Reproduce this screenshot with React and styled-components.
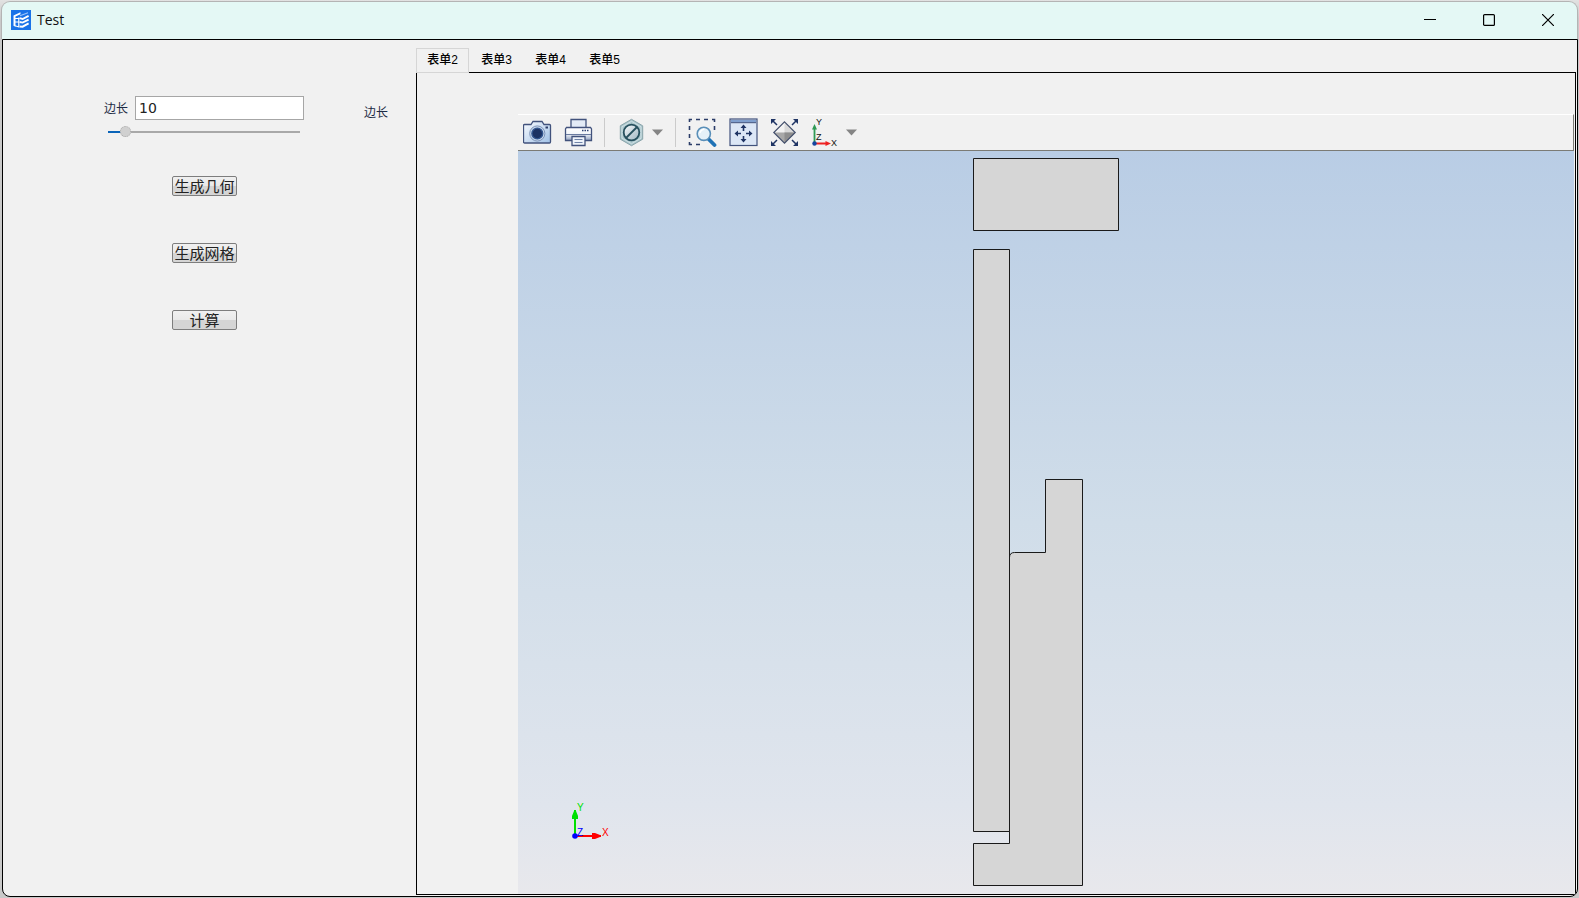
import React, { useState } from 'react'
import styled, { createGlobalStyle } from 'styled-components'

const GlobalStyle = createGlobalStyle`
    * {
        box-sizing: border-box;
    }

    body {
        margin: 0;
        background: #c9c9c9;
        font-family: "Liberation Sans", "Noto Sans CJK SC", sans-serif;
        font-size: 12px;
        color: #222;
    }

    button, input {
        font-family: inherit;
        color: inherit;
    }
`
const Window = styled.div`
    display: flex;
    flex-direction: column;
    min-height: 100vh;
    padding: 1px;
    background: linear-gradient(#e2e2e2, #c9c9c9 20px);
`
const TitleBar = styled.header`
    display: flex;
    align-items: center;
    height: 38px;
    padding: 0 0 2px 9px;
    border: 1px solid #b4b4b4;
    border-bottom: 0;
    border-radius: 9px 9px 0 0;
    background: #e4f8f5;
    overflow: hidden;
`
const Title = styled.h1`
    flex: 1;
    margin: 0 0 0 6px;
    font-family: "Open Sans", sans-serif;
    font-size: 14px;
    font-weight: 400;
    color: #111;
`
const WindowButton = styled.button`
    display: flex;
    align-items: center;
    justify-content: center;
    width: 59px;
    height: 35px;
    padding: 0;
    border: 0;
    background: none;
`
const Body = styled.main`
    display: flex;
    flex: 1;
    margin: 0 0 0 1px;
    padding: 0 1px 1px 0;
    border: 1px solid #000;
    border-radius: 0 0 8px 8px;
    background: #f1f1f1;
    overflow: hidden;
`
const Sidebar = styled.form`
    flex: 0 0 413px;
    padding: 56px 0 0 101px;
`
const Settings = styled.div`
    display: flex;
    gap: 60px;
`
const Fields = styled.div`
    width: 200px;
`
const Field = styled.div`
    display: flex;
    align-items: center;
    gap: 7px;
`
const Label = styled.label`
    font-family: "Noto Sans CJK SC", sans-serif;
    font-size: 12px;
    line-height: ${props => props.$tall ? '32px' : '24px'};
    color: #1c2a44;
`
const TextInput = styled.input`
    flex: 1;
    min-width: 0;
    height: 24px;
    padding: 0 3px;
    border: 1px solid #a6a6a6;
    background: #fff;
    font-family: "DejaVu Sans", sans-serif;
    font-size: 14px;
    outline: 0;
`
const Slider = styled.input`
    display: block;
    width: 192px;
    height: 12px;
    margin: 6px 4px 0;
    appearance: none;
    background: none;

    &::-webkit-slider-runnable-track {
        height: 2px;
        background: linear-gradient(to right, #0a64b9 var(--fill), #a9a9a9 var(--fill));
    }

    &::-webkit-slider-thumb {
        appearance: none;
        width: 11px;
        height: 11px;
        margin-top: -5px;
        border: 1px dotted #aaa;
        border-radius: 50%;
        background: #d0d0d0;
    }
`
const Actions = styled.div`
    display: flex;
    flex-direction: column;
    align-items: center;
    gap: 47px;
    width: 201px;
    margin-top: 38px;
`
const ActionButton = styled.button`
    width: 65px;
    height: 20px;
    padding: 0;
    border: 1px solid #7d7d7d;
    border-radius: 2px;
    background: linear-gradient(#f0f0f0, #e9e9e9 50%, #d5d5d5 50%, #d5d5d5);
    font-family: "Noto Sans CJK SC", sans-serif;
    font-size: 15px;
    line-height: 18px;
    white-space: nowrap;
`
const Content = styled.section`
    display: flex;
    flex: 1;
    flex-direction: column;
    min-width: 0;
    padding-top: 8px;
`
const TabList = styled.div`
    display: flex;
    align-items: flex-start;
    gap: 1px;
    height: 24px;
`
const Tab = styled.button`
    width: 53px;
    height: ${props => props.$active ? '25px' : '24px'};
    padding: 0;
    border: 1px solid ${props => props.$active ? '#d6d6d6' : 'transparent'};
    border-bottom-width: ${props => props.$active ? '1px' : '0'};
    background: #f1f1f1;
    font-size: 12px;
    font-weight: 500;
    line-height: 23px;
    color: #000;
    z-index: 1;
`
const TabPanel = styled.div`
    display: flex;
    flex: 1;
    flex-direction: column;
    padding: 41px 1px 0 101px;
    border: 1px solid #000;
`
const Toolbar = styled.div`
    display: flex;
    align-items: center;
    gap: 12px;
    height: 37px;
    padding-left: 5px;
    border-top: 1px solid #fff;
    border-right: 1px solid #7b7b75;
    border-bottom: 1px solid #7b7b75;
`
const ToolGroup = styled.div`
    display: flex;
    align-items: center;
    gap: 5px;
`
const ToolButton = styled.button`
    display: flex;
    align-items: center;
    justify-content: center;
    width: ${props => props.$narrow ? '13px' : '29px'};
    height: 29px;
    padding: 0;
    border: 0;
    background: none;

    svg {
        flex: none;
    }
`
const Separator = styled.span`
    width: 1px;
    height: 29px;
    margin-left: -1px;
    background: #cbcbcb;
`
const Viewport = styled.div`
    position: relative;
    display: flex;
    flex: 1;
    align-items: center;
    justify-content: center;
    background: linear-gradient(#b9cde5, #d0dde9 50%, #e0e5ed 88%, #e8e8ec);
`
const Triad = styled.svg`
    position: absolute;
    left: 50px;
    bottom: 49px;
`

const AppIcon = () => (
    <svg width="20" height="20" viewBox="0 0 20 20">
        <rect width="20" height="20" fill="#1a73e8" />
        <path d="M2.500 5.500 9.500 2.300v1.900L4.500 6.500v10.300l-2-1z" fill="#fff" />
        <path d="M4 8.500h4.500M4 12h3.500M4 15.800l4 1.200M7.800 7.500v10" stroke="#fff" strokeWidth="1.200" fill="none" />
        <path d="m8.600 8.200 3 .8 6-3.200M8.600 12l3 .6 6-3M8.600 16.500l3 .2 6-3.400" stroke="#fff" strokeWidth="1.900" fill="none" />
        <path d="m9 5.800 8-3" stroke="#9cc5fb" strokeWidth="1.200" />
    </svg>
)

const CameraIcon = () => (
    <svg width="29" height="29" viewBox="0 0 29 29">
        <defs>
            <linearGradient id="camera" x1="0" y1="0" x2="1" y2="1">
                <stop offset="0" stopColor="#fafcff" />
                <stop offset="1" stopColor="#9fc0e6" />
            </linearGradient>
        </defs>
        <path d="M1.500 6.500H8l2-3h9l2 3h5.500q1 0 1 1v16.500q0 1-1 1h-25q-1 0-1-1V7.500q0-1 1-1z" fill="url(#camera)" stroke="#41527c" strokeWidth="1.300" />
        <circle cx="14.300" cy="15.500" r="7.600" fill="#c3d5ec" stroke="#7d93b8" />
        <circle cx="14.300" cy="15.500" r="5.400" fill="#1c3263" stroke="#33568f" strokeWidth="1.400" />
        <rect x="22.500" y="8.500" width="2.500" height="2" fill="#2b3d69" />
    </svg>
)

const PrinterIcon = () => (
    <svg width="29" height="29" viewBox="0 0 29 29">
        <defs>
            <linearGradient id="printer" x1="0" y1="0" x2="0" y2="1">
                <stop offset="0" stopColor="#fff" />
                <stop offset=".5" stopColor="#f3f6fa" />
                <stop offset="1" stopColor="#8f9fbd" />
            </linearGradient>
        </defs>
        <path d="M7 10V1.500h15V10" fill="#e3ebf6" stroke="#41527c" strokeWidth="1.300" />
        <path d="M2.500 9.500h24l1 1.500v11.500h-26V11z" fill="url(#printer)" stroke="#41527c" strokeWidth="1.300" />
        <path d="M2 16.500h25" stroke="#6a7ba0" />
        <path d="M18 12.500h1.500M20.500 12.500H22M23 12.500h1.500" stroke="#2f4373" strokeWidth="1.500" />
        <path d="M8 18.500h13v9H8z" fill="#eef3fa" stroke="#41527c" strokeWidth="1.300" />
        <path d="M10.500 21.500h8M10.500 24.500h8" stroke="#6f83a8" />
    </svg>
)

const HideIcon = () => (
    <svg width="29" height="29" viewBox="0 0 29 29">
        <defs>
            <linearGradient id="hide" x1="0" y1="0" x2="1" y2="1">
                <stop offset="0" stopColor="#f8fbfd" />
                <stop offset="1" stopColor="#9db3bf" />
            </linearGradient>
        </defs>
        <path d="M14.500 1.300 25.700 7.800v13.400L14.500 27.700 3.300 21.200V7.800z" fill="#a9c5cb" stroke="#8aa4aa" />
        <path d="M14.500 3.300 24 8.800v11.400l-9.500 5.500L5 20.200V8.800z" fill="none" stroke="#cfe0e4" />
        <circle cx="14.500" cy="14.500" r="7.800" fill="url(#hide)" stroke="#27505e" strokeWidth="1.800" />
        <path d="m9 20 11-11" stroke="#27505e" strokeWidth="1.800" />
    </svg>
)

const ZoomBoxIcon = () => (
    <svg width="29" height="29" viewBox="0 0 29 29">
        <g stroke="#2b3c68" strokeWidth="1.600" fill="none">
            <path d="M1.500 4V1.500H4M8 1.500h4M16 1.500h4M24 1.500h2.500V4" />
            <path d="M1.500 8v4M1.500 16v4M1.500 24v2.500H4M8 26.500h4M26.500 8v4" />
        </g>
        <path d="m20.500 21 6 6" stroke="#1f72b5" strokeWidth="3.800" strokeLinecap="round" />
        <circle cx="15.800" cy="15.800" r="6.600" fill="#e6f1f8" stroke="#5a8fb8" strokeWidth="1.600" />
        <path d="M11.800 15q1-3.500 4.500-3.800" stroke="#fff" strokeWidth="1.600" fill="none" />
    </svg>
)

const ExtentsIcon = () => (
    <svg width="29" height="29" viewBox="0 0 29 29">
        <rect x="1" y="1" width="27" height="26.500" fill="#dce7f6" stroke="#41527c" strokeWidth="1.200" />
        <path d="M2 2h25v2.500H2z" fill="#7f9fce" />
        <path d="M2 4.700h25" stroke="#41527c" />
        <path d="M14.500 9v4M14.500 18v4M8 15.500h4M17 15.500h4" stroke="#1f3464" strokeWidth="1.600" />
        <path d="m14.500 6.500 3 3.500h-6zM14.500 24.500l3-3.500h-6zM5.500 15.500 9 12.500v6zM23.500 15.500 20 12.500v6z" fill="#1f3464" />
    </svg>
)

const DiamondIcon = () => (
    <svg width="29" height="29" viewBox="0 0 29 29">
        <path d="M14.500 4 25 14.500H4z" fill="#f2f2f2" />
        <path d="M14.500 4 25 14.500H14.500z" fill="#d9d9d9" />
        <path d="M14.500 25 25 14.500H4z" fill="#a8a8a8" />
        <path d="M14.500 25 25 14.500H14.500z" fill="#8e8e8e" />
        <path d="M14.500 3.800 25.200 14.500 14.500 25.200 3.800 14.500z" fill="none" stroke="#44506c" strokeWidth="1.200" />
        <path d="m2 2 5 5M27 2l-5 5M2 27l5-5M27 27l-5-5" stroke="#1f3464" strokeWidth="1.500" />
        <path d="M1 1h5L1 6zM28 1h-5l5 5zM1 28h5l-5-5zM28 28h-5l5-5z" fill="#1f3464" />
    </svg>
)

const AxesIcon = () => (
    <svg width="29" height="29" viewBox="0 0 29 29" fontFamily="Liberation Sans, sans-serif" fontSize="9" fill="#111">
        <path d="M3.500 25V9" stroke="#2f9a54" strokeWidth="1.800" />
        <path d="m3.500 6 2.500 5.500H1z" fill="#2f9a54" />
        <path d="M4 25.500h11" stroke="#ee2222" strokeWidth="1.800" />
        <path d="m20 25.500-5.500-2.500v5z" fill="#ee2222" />
        <circle cx="3.500" cy="25.500" r="2.200" fill="#1545a0" />
        <text x="5" y="7">Y</text>
        <text x="5" y="22">Z</text>
        <text x="20" y="28">X</text>
    </svg>
)

const Caret = () => (
    <svg width="11" height="7" viewBox="0 0 11 7">
        <path d="M0 .5h11L5.500 6.500z" fill="#858585" />
    </svg>
)

const Geometry = () => (
    <svg width="147" height="730" viewBox="0 0 147 730" fill="#d6d6d6" stroke="#1a1a1a">
        <path d="M.5.5h145v72H.5z" />
        <path d="M36.500 685.500V399.500q0-5 5-5h31v-73h37v406H.5v-42z" />
        <path d="M.5 91.500h36v582H.5z" />
    </svg>
)

const AxisTriad = () => (
    <Triad width="46" height="42" viewBox="0 0 46 42" fontFamily="Liberation Sans, sans-serif" fontSize="10">
        <path d="M7 33h26" stroke="#f00" strokeWidth="2" />
        <path d="M24 30h3l5 2v2l-5 2h-3z" fill="#f00" />
        <path d="M7 33V7" stroke="#00e000" strokeWidth="2" />
        <path d="M4 16v-3l2-5h2l2 5v3z" fill="#00e000" />
        <circle cx="7" cy="33" r="2.800" fill="#00f" />
        <text x="9" y="8" fill="#00e000">Y</text>
        <text x="9" y="33" fill="#00f">Z</text>
        <text x="34" y="33" fill="#f00">X</text>
    </Triad>
)

const tabs = ['表单2', '表单3', '表单4', '表单5']
const actions = ['生成几何', '生成网格', '计算']
const MAX_LENGTH = 150

const App = () => {
    const [length, setLength] = useState('10')
    const [active, setActive] = useState(tabs[0])
    const onChange = e => setLength(e.target.value)

    return (
        <Window>
            <GlobalStyle />
            <TitleBar>
                <AppIcon />
                <Title>Test</Title>
                <WindowButton aria-label="Minimize">
                    <svg width="12" height="12" viewBox="0 0 12 12"><path d="M0 5.500h12" stroke="#000" /></svg>
                </WindowButton>
                <WindowButton aria-label="Maximize">
                    <svg width="12" height="12" viewBox="0 0 12 12"><rect x=".6" y=".6" width="10.800" height="10.800" rx="1" fill="none" stroke="#000" strokeWidth="1.200" /></svg>
                </WindowButton>
                <WindowButton aria-label="Close">
                    <svg width="12" height="12" viewBox="0 0 12 12"><path d="m0 0 12 12M12 0 0 12" stroke="#000" strokeWidth="1.200" /></svg>
                </WindowButton>
            </TitleBar>

            <Body>
                <Sidebar onSubmit={e => e.preventDefault()}>
                    <Settings>
                        <Fields>
                            <Field>
                                <Label htmlFor="length">边长</Label>
                                <TextInput id="length" value={length} onChange={onChange} />
                            </Field>
                            <Slider
                                id="length-slider"
                                type="range"
                                min="0"
                                max={MAX_LENGTH}
                                value={Number(length) || 0}
                                onChange={onChange}
                                style={{ '--fill': `${(Number(length) || 0) / MAX_LENGTH * 100}%` }}
                            />
                        </Fields>
                        <Label htmlFor="length-slider" $tall>边长</Label>
                    </Settings>
                    <Actions>
                        {actions.map(name => <ActionButton key={name}>{name}</ActionButton>)}
                    </Actions>
                </Sidebar>

                <Content>
                    <TabList role="tablist">
                        {tabs.map(name => (
                            <Tab key={name} role="tab" aria-selected={name === active} $active={name === active} onClick={() => setActive(name)}>
                                {name}
                            </Tab>
                        ))}
                    </TabList>
                    <TabPanel role="tabpanel">
                        <Toolbar role="toolbar">
                            <ToolButton aria-label="Image snapshot"><CameraIcon /></ToolButton>
                            <ToolButton aria-label="Print"><PrinterIcon /></ToolButton>
                            <Separator />
                            <ToolGroup>
                                <ToolButton aria-label="Hide"><HideIcon /></ToolButton>
                                <ToolButton aria-label="Hide options" $narrow><Caret /></ToolButton>
                            </ToolGroup>
                            <Separator />
                            <ToolButton aria-label="Zoom box"><ZoomBoxIcon /></ToolButton>
                            <ToolButton aria-label="Zoom extents"><ExtentsIcon /></ToolButton>
                            <ToolButton aria-label="Zoom selected"><DiamondIcon /></ToolButton>
                            <ToolGroup>
                                <ToolButton aria-label="View direction"><AxesIcon /></ToolButton>
                                <ToolButton aria-label="View options" $narrow><Caret /></ToolButton>
                            </ToolGroup>
                        </Toolbar>
                        <Viewport>
                            <Geometry />
                            <AxisTriad />
                        </Viewport>
                    </TabPanel>
                </Content>
            </Body>
        </Window>
    )
}

export default App
